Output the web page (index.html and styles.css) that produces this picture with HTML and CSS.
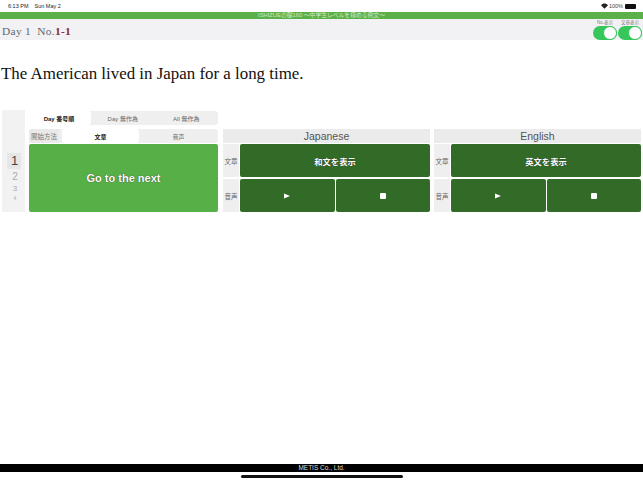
FILE: index.html
```html
<!DOCTYPE html>
<html lang="ja">
<head>
<meta charset="utf-8">
<title>ISHIZUE</title>
<link rel="stylesheet" href="styles.css">
</head>
<body>
<div class="app">
  <div class="status">
    <span class="time">6:13 PM</span><span class="date">Sun May 2</span>
    <span class="status-right">
      <svg class="wifi" width="7" height="6" viewBox="0 0 9 7"><path d="M4.5 7 0 2.4C2.6-.3 6.4-.3 9 2.4Z" fill="#222"/></svg>
      <span>100%</span>
      <span class="battery"></span>
    </span>
  </div>
  <div class="title-bar">ISHIZUEの礎160 ～中学生レベルを極める例文～</div>
  <div class="header">
    <div class="day">Day 1&nbsp; No.<span class="num">1-1</span></div>
    <div class="toggles">
      <div class="toggle-item"><span class="toggle-label">No.表示</span><span class="switch"><span class="knob"></span></span></div>
      <div class="toggle-item"><span class="toggle-label">文章表示</span><span class="switch"><span class="knob"></span></span></div>
    </div>
  </div>
  <p class="sentence">The American lived in Japan for a long time.</p>
  <div class="panel">
    <div class="picker">
      <span class="pick active">1</span>
      <span class="pick p2">2</span>
      <span class="pick p3">3</span>
      <span class="pick p4">4</span>
    </div>
    <div class="start">
      <div class="seg seg-top">
        <span class="seg-item on">Day 番号順</span>
        <span class="seg-item">Day 無作為</span>
        <span class="seg-item">All 無作為</span>
      </div>
      <div class="seg seg-mid">
        <span class="seg-label">開始方法</span>
        <span class="seg-item on">文章</span>
        <span class="seg-item">音声</span>
      </div>
      <button class="next">Go to the next</button>
    </div>
    <div class="lang lang-ja">
      <div class="lang-head">Japanese</div>
      <div class="lang-row">
        <span class="row-label">文章</span>
        <button class="dark">和文を表示</button>
      </div>
      <div class="lang-row">
        <span class="row-label">音声</span>
        <button class="dark"><svg width="6" height="6" viewBox="0 0 7 6"><path d="M0 0 7 3 0 6Z" fill="#fff"/></svg></button>
        <button class="dark"><span class="stop"></span></button>
      </div>
    </div>
    <div class="lang">
      <div class="lang-head">English</div>
      <div class="lang-row">
        <span class="row-label">文章</span>
        <button class="dark">英文を表示</button>
      </div>
      <div class="lang-row">
        <span class="row-label">音声</span>
        <button class="dark"><svg width="6" height="6" viewBox="0 0 7 6"><path d="M0 0 7 3 0 6Z" fill="#fff"/></svg></button>
        <button class="dark"><span class="stop"></span></button>
      </div>
    </div>
  </div>
  <div class="footer">METIS Co., Ltd.</div>
  <div class="home-zone"><span class="home"></span></div>
</div>
</body>
</html>
```
FILE: styles.css
```css
* { box-sizing: border-box; }
html, body { margin: 0; padding: 0; background: #fff; }
body { font-family: "Liberation Sans", "Noto Sans CJK JP", sans-serif; overflow: hidden; }
.app { width: 643px; height: 482px; display: flex; flex-direction: column; }

.status { height: 12px; display: flex; align-items: center; padding: 0 2px 0 8px; font-size: 5.5px; color: #222; }
.date { margin-left: 6px; }
.status-right { margin-left: auto; display: flex; align-items: center; gap: 1px; margin-right: 5px; font-size: 5.5px; color: #444; }
.battery { width: 11px; height: 5px; background: #111; border-radius: 1px; margin-left: 1px; }

.title-bar { height: 7px; background: #5cb04a; color: #cfe9c6; font-size: 5.8px; line-height: 7px; text-align: center; }

.header { height: 21px; background: #f2f2f5; display: flex; justify-content: space-between; padding-left: 2px; }
.day { font-family: "Liberation Serif", "Noto Sans CJK JP", serif; font-size: 11.4px; line-height: 24px; color: #666; letter-spacing: 0.3px; }
.num { color: #8c2a2a; font-weight: bold; }
.toggles { display: flex; gap: 1px; padding-right: 1px; }
.toggle-item { width: 24px; display: flex; flex-direction: column; align-items: center; }
.toggle-label { font-size: 4.5px; line-height: 7px; color: #777; white-space: nowrap; }
.switch { width: 24px; height: 14px; border-radius: 7px; background: #35c759; display: flex; justify-content: flex-end; }
.knob { width: 14px; height: 14px; border-radius: 50%; background: #fff; border: 1px solid #35c759; }

.sentence { margin: 23px 0 0; padding-left: 1px; height: 47px; font-family: "Liberation Serif", serif; font-size: 16.9px; line-height: 21px; color: #111; }

.panel { display: flex; height: 102px; padding-left: 2px; }
.picker { width: 23px; background: #f2f2f2; display: flex; flex-direction: column; align-items: center; padding-top: 43px; color: #aaa; overflow: hidden; }
.pick { width: 100%; text-align: center; padding-left: 3px; line-height: 12px; font-size: 10px; }
.pick.active { width: 14px; margin-left: 1px; padding-left: 1px; background: #e6e6e6; color: #444; font-size: 13px; line-height: 16px; }
.p2 { margin-top: 2px; }
.p3 { font-size: 8px; line-height: 12px; }
.p4 { font-size: 5px; line-height: 6px; }

.start { width: 191px; margin-left: 2px; display: flex; flex-direction: column; }
.seg { display: flex; background: #efeff0; border-radius: 3px; height: 14px; align-items: stretch; font-size: 6px; color: #666; }
.seg-top { margin-top: 1px; }
.seg-mid { margin-top: 4px; margin-left: 2px; height: 14px; }
.seg-item { flex: 1; display: flex; align-items: center; justify-content: center; }
.seg-item.on { background: #fff; color: #222; border-radius: 3px; font-weight: bold; }
.seg-top .seg-item.on { flex: 0 0 64px; }
.seg-label { width: 30px; background: #e9e9e9; display: flex; align-items: center; justify-content: center; font-size: 6.5px; color: #777; border-radius: 3px 0 0 3px; }
.seg-mid .seg-item.on { flex: 0 0 77px; margin-left: 3px; }
.next { flex: 0 0 68px; margin: 1px 0 0 2px; border: 0; border-radius: 2px; background: #57b047; color: #fff; font: 700 11px "Liberation Sans", sans-serif; letter-spacing: 0; text-shadow: 0 0 1px #222; padding: 0; }

.lang { width: 207px; margin-left: 4px; padding-top: 19px; display: flex; flex-direction: column; gap: 2px; }
.lang-ja { margin-left: 5px; }
.lang-head { height: 14px; margin-bottom: -1px; background: #ebebeb; text-align: center; font-size: 10.5px; line-height: 15px; color: #555; }
.lang-row { display: flex; height: 33px; gap: 1px; }
.row-label { width: 16px; background: #efefef; display: flex; align-items: center; justify-content: center; font-size: 6.5px; color: #666; white-space: nowrap; }
.dark { flex: 1; min-width: 0; border: 0; padding: 0; border-radius: 2px; background: #326a27; color: #fff; font: 700 8.3px "Noto Sans CJK JP", sans-serif; display: flex; align-items: center; justify-content: center; text-shadow: 0 0 1px #222; }
.stop { width: 6px; height: 6px; background: #fff; border-radius: 1px; }

.footer { margin-top: 252px; height: 8px; background: #000; color: #ddd; font-size: 6.5px; line-height: 8px; text-align: center; }
.home-zone { flex: 1; display: flex; justify-content: center; padding-top: 3px; }
.home { width: 162px; height: 3px; border-radius: 2px; background: #111; }
```
